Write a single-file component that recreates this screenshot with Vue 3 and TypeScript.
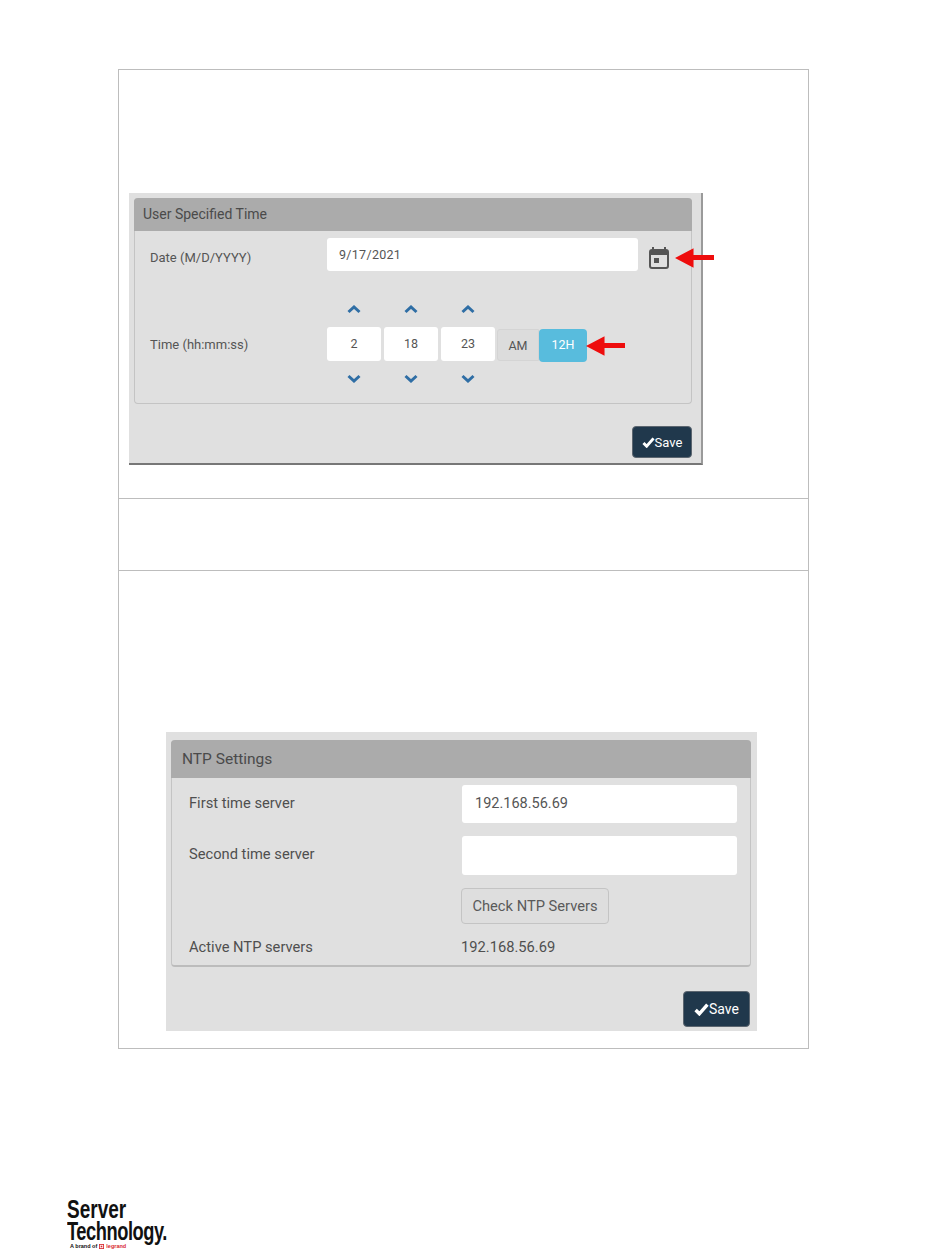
<template>
  <div class="page">
    <div class="doc-table">
      <section class="doc-row row-time">
        <div class="shot shot-time">
          <div class="panel panel-time">
            <div class="panel-head head-time">User Specified Time</div>
            <div class="date-line">
              <span class="lbl">Date (M/D/YYYY)</span>
              <div class="field date-field">9/17/2021</div>
              <svg class="cal" viewBox="0 0 20 22" width="20" height="22">
                <path d="M4 0v4M16 0v4" stroke="#555" stroke-width="2" fill="none" />
                <rect x="1" y="3" width="18" height="18" rx="2" fill="none" stroke="#555" stroke-width="2" />
                <rect x="1" y="3" width="18" height="5" fill="#555" />
                <rect x="5" y="11" width="5" height="5" fill="#555" />
              </svg>
              <svg class="arrow arrow-cal" viewBox="0 0 40 20" width="39" height="20">
                <path d="M0 10 L19 0 V7 H40 V12 H19 V20 Z" fill="#ee0d0d" />
              </svg>
            </div>
            <div class="time-line">
              <span class="lbl">Time (hh:mm:ss)</span>
              <div class="spinners">
                <div v-for="(part, i) in timeParts" :key="i" class="spin">
                  <svg class="chev" viewBox="0 0 14 9" width="14" height="9">
                    <path d="M1.5 7 7 2l5.5 5" fill="none" stroke="#2f6ea5" stroke-width="3" />
                  </svg>
                  <div class="field spin-field">{{ part }}</div>
                  <svg class="chev" viewBox="0 0 14 9" width="14" height="9">
                    <path d="M1.5 2 7 7l5.5-5" fill="none" stroke="#2f6ea5" stroke-width="3" />
                  </svg>
                </div>
              </div>
              <div class="ampm">AM</div>
              <div class="mode">12H</div>
              <svg class="arrow arrow-mode" viewBox="0 0 40 20" width="39" height="20">
                <path d="M0 10 L19 0 V7 H40 V12 H19 V20 Z" fill="#ee0d0d" />
              </svg>
            </div>
          </div>
          <div class="foot foot-time">
            <button class="save save-time" type="button">
              <svg viewBox="0 0 14 12" width="13" height="11">
                <path d="M1.5 6.5 5 10l7.5-8.5" fill="none" stroke="#fff" stroke-width="3.2" />
              </svg>Save
            </button>
          </div>
        </div>
      </section>

      <section class="doc-row row-gap"></section>

      <section class="doc-row row-ntp">
        <div class="shot shot-ntp">
          <div class="panel panel-ntp">
            <div class="panel-head head-ntp">NTP Settings</div>
            <div class="ntp-body">
              <span class="lbl-ntp lbl-first">First time server</span>
              <div class="field ntp-field">192.168.56.69</div>
              <span class="lbl-ntp lbl-second">Second time server</span>
              <div class="field ntp-field ntp-second"></div>
              <span></span>
              <button class="check" type="button">Check NTP Servers</button>
              <span class="lbl-ntp lbl-active">Active NTP servers</span>
              <span class="active-val">192.168.56.69</span>
            </div>
          </div>
          <div class="foot foot-ntp">
            <button class="save save-ntp" type="button">
              <svg viewBox="0 0 14 12" width="15" height="13">
                <path d="M1.5 6.5 5 10l7.5-8.5" fill="none" stroke="#fff" stroke-width="3.2" />
              </svg>Save
            </button>
          </div>
        </div>
      </section>
    </div>

    <footer class="logo">
      <div class="logo-word">Server</div>
      <div class="logo-word word-tech">Technology.</div>
      <div class="logo-sub">
        A brand of
        <svg viewBox="0 0 6 6" width="5" height="5">
          <rect x="0.5" y="0.5" width="5" height="5" fill="none" stroke="#d8282f" />
          <rect x="2" y="2" width="2" height="2" fill="#d8282f" />
        </svg>
        <b>legrand</b>
      </div>
    </footer>
  </div>
</template>

<script setup lang="ts">
const timeParts: string[] = ['2', '18', '23']
</script>

<style>
html,
body {
  margin: 0;
  background: #fff;
}
</style>

<style scoped>
.page {
  width: 950px;
  height: 1260px;
  box-sizing: border-box;
  padding: 69px 0 0 67px;
  font-family: Roboto, "Liberation Sans", sans-serif;
  color: #555;
  overflow: hidden;
}

.doc-table {
  width: 691px;
  margin-left: 51px;
  border: 1px solid #bdbdbd;
  box-sizing: border-box;
}

.doc-row + .doc-row {
  border-top: 1px solid #bdbdbd;
}

.row-time {
  height: 428px;
  box-sizing: border-box;
  padding: 123px 0 0 10px;
}

.row-gap {
  height: 72px;
  box-sizing: border-box;
}

.row-ntp {
  height: 478px;
  box-sizing: border-box;
  padding: 161px 0 0 47px;
}

.shot {
  background: #e0e0e0;
  box-sizing: border-box;
}

.shot-time {
  width: 574px;
  height: 272px;
  padding: 5px 9px 0 5px;
  border-right: 2px solid #9a9a9a;
  border-bottom: 2px solid #777;
}

.shot-ntp {
  width: 591px;
  height: 299px;
  padding: 8px 6px 0 5px;
}

.panel {
  border: 1px solid #c4c4c4;
  border-top: 0;
  border-radius: 4px;
  box-sizing: border-box;
}

.panel-time {
  height: 206px;
}

.panel-ntp {
  height: 227px;
  border-bottom: 2px solid #bcbcbc;
}

.panel-head {
  background: #ababab;
  border-radius: 4px 4px 0 0;
  color: #4a4a4a;
  margin: 0 -1px;
}

.head-time {
  height: 33px;
  line-height: 33px;
  padding-left: 9px;
  font-size: 14px;
}

.head-ntp {
  height: 38px;
  line-height: 39px;
  padding-left: 11px;
  font-size: 15.5px;
}

.field {
  background: #fff;
  border-radius: 3px;
  box-sizing: border-box;
  color: #555;
}

.date-line {
  position: relative;
  display: flex;
  align-items: flex-start;
  padding: 7px 0 0 15px;
  height: 53px;
  box-sizing: border-box;
}

.lbl {
  width: 177px;
  font-size: 13px;
  flex: none;
}

.date-line .lbl {
  padding-top: 12px;
}

.date-field {
  width: 311px;
  height: 33px;
  line-height: 33px;
  padding-left: 12px;
  font-size: 12.5px;
  letter-spacing: 0.3px;
}

.cal {
  margin: 9px 0 0 11px;
}

.arrow {
  position: absolute;
}

.arrow-cal {
  left: 540px;
  top: 17px;
}

.time-line {
  position: relative;
  display: flex;
  align-items: center;
  padding: 21px 0 0 15px;
}

.spinners {
  display: flex;
  gap: 3px;
  flex: none;
}

.spin {
  display: flex;
  flex-direction: column;
  align-items: center;
  gap: 14px;
  width: 54px;
}

.spin-field {
  width: 100%;
  height: 34px;
  line-height: 34px;
  text-align: center;
  font-size: 12.5px;
  margin: -1px 0;
}

.ampm {
  width: 42px;
  height: 32px;
  line-height: 32px;
  margin: 2px 0 0 2px;
  text-align: center;
  font-size: 12.5px;
  background: #dcdcdc;
  border: 1px solid #d4d4d4;
  border-radius: 3px 0 0 3px;
  box-sizing: border-box;
}

.mode {
  width: 48px;
  height: 33px;
  line-height: 32px;
  margin-top: 2px;
  text-align: center;
  font-size: 12.5px;
  color: #fff;
  background: #58bcdd;
  border-radius: 4px;
}

.arrow-mode {
  left: 451px;
  top: 52px;
}

.foot {
  display: flex;
  justify-content: flex-end;
}

.foot-time {
  padding-top: 22px;
}

.foot-ntp {
  padding: 24px 1px 0 0;
}

.save {
  display: flex;
  align-items: center;
  justify-content: center;
  padding: 0;
  background: #20384c;
  border: 1px solid #5c6670;
  border-radius: 4px;
  color: #fff;
  font-family: inherit;
  box-sizing: border-box;
}

.save-time {
  width: 60px;
  height: 32px;
  font-size: 13px;
}

.save-ntp {
  width: 67px;
  height: 36px;
  font-size: 14px;
}

.ntp-body {
  display: grid;
  grid-template-columns: 273px 275px;
  padding: 7px 0 0 17px;
  align-items: center;
}

.lbl-ntp {
  font-size: 14.7px;
  color: #4f4f4f;
}

.lbl-first {
  align-self: start;
  padding-top: 9px;
}

.lbl-second {
  align-self: start;
  padding-top: 9px;
}

.lbl-active {
  margin-top: 14px;
  line-height: 16px;
}

.ntp-field {
  height: 38px;
  line-height: 38px;
  padding-left: 13px;
  font-size: 14.5px;
  margin-bottom: 13px;
}

.ntp-second {
  height: 39px;
}

.check {
  justify-self: start;
  width: 148px;
  height: 36px;
  margin-left: -1px;
  padding: 0;
  font-family: inherit;
  font-size: 14.7px;
  color: #5a5a5a;
  background: #dedede;
  border: 1px solid #c4c4c4;
  border-radius: 4px;
}

.active-val {
  font-size: 14.7px;
  color: #4f4f4f;
  margin: 15px 0 0 -1px;
  line-height: 16px;
}

.logo {
  margin-top: 149px;
  color: #111;
  width: 110px;
}

.logo-word {
  font-family: "Liberation Sans", sans-serif;
  font-weight: 700;
  font-size: 25px;
  line-height: 22px;
  white-space: nowrap;
  transform: scaleX(0.76);
  transform-origin: left center;
}

.word-tech {
  letter-spacing: -0.6px;
  transform: scaleX(0.73);
}

.logo-sub {
  display: flex;
  align-items: center;
  gap: 2px;
  margin: 1px 0 0 3px;
  font-family: "Liberation Sans", sans-serif;
  font-size: 5.5px;
  line-height: 6px;
  font-weight: 700;
  white-space: nowrap;
}

.logo-sub b {
  color: #d8282f;
}
</style>
